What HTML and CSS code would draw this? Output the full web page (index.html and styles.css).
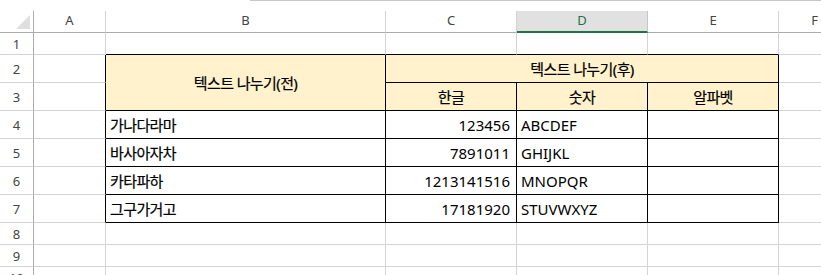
FILE: index.html
```html
<!DOCTYPE html>
<html lang="ko">
<head>
<meta charset="utf-8">
<title>텍스트 나누기</title>
<link rel="stylesheet" href="styles.css">
</head>
<body>
<div class="topbar"><div class="topbar-gap"></div><div class="topbar-line"></div></div>
<div class="sheet">
  <!-- column headers -->
  <div class="corner"><svg width="33" height="21" viewBox="0 0 33 21"><polygon points="16,18 30,18 30,4" fill="#dfdfdf"/></svg></div>
  <div class="ch">A</div>
  <div class="ch">B</div>
  <div class="ch">C</div>
  <div class="ch sel">D</div>
  <div class="ch">E</div>
  <div class="ch">F</div>

  <!-- row 1 -->
  <div class="rh">1</div>
  <div class="c"></div>
  <div class="c bb"></div>
  <div class="c bb"></div>
  <div class="c bb"></div>
  <div class="c bb"></div>
  <div class="c"></div>

  <!-- row 2 -->
  <div class="rh">2</div>
  <div class="c br"></div>
  <div class="t hd ctr ko span-r">텍스트 나누기(전)</div>
  <div class="t hd ctr ko span-c">텍스트 나누기(후)</div>
  <div class="c"></div>

  <!-- row 3 -->
  <div class="rh">3</div>
  <div class="c br"></div>
  <div class="t hd ctr ko">한글</div>
  <div class="t hd ctr ko">숫자</div>
  <div class="t hd ctr ko">알파벳</div>
  <div class="c"></div>

  <!-- row 4 -->
  <div class="rh">4</div>
  <div class="c br"></div>
  <div class="t txt ko">가나다라마</div>
  <div class="t num">123456</div>
  <div class="t txt">ABCDEF</div>
  <div class="t"></div>
  <div class="c"></div>

  <!-- row 5 -->
  <div class="rh">5</div>
  <div class="c br"></div>
  <div class="t txt ko">바사아자차</div>
  <div class="t num">7891011</div>
  <div class="t txt">GHIJKL</div>
  <div class="t"></div>
  <div class="c"></div>

  <!-- row 6 -->
  <div class="rh">6</div>
  <div class="c br"></div>
  <div class="t txt ko">카타파하</div>
  <div class="t num">1213141516</div>
  <div class="t txt">MNOPQR</div>
  <div class="t"></div>
  <div class="c"></div>

  <!-- row 7 -->
  <div class="rh">7</div>
  <div class="c br"></div>
  <div class="t txt ko">그구가거고</div>
  <div class="t num">17181920</div>
  <div class="t txt">STUVWXYZ</div>
  <div class="t"></div>
  <div class="c"></div>

  <!-- row 8 -->
  <div class="rh">8</div>
  <div class="c"></div><div class="c"></div><div class="c"></div><div class="c"></div><div class="c"></div><div class="c"></div>

  <!-- row 9 -->
  <div class="rh">9</div>
  <div class="c"></div><div class="c"></div><div class="c"></div><div class="c"></div><div class="c"></div><div class="c"></div>

  <!-- row 10 -->
  <div class="rh rh-last">10</div>
  <div class="c"></div><div class="c"></div><div class="c"></div><div class="c"></div><div class="c"></div><div class="c"></div>
</div>
</body>
</html>
```

FILE: styles.css
```css
html, body {
  margin: 0;
  padding: 0;
  background: #ffffff;
  overflow: hidden;
  width: 821px;
  height: 275px;
}

.topbar {
  display: flex;
  height: 11px;
}
.topbar-gap {
  width: 250px;
}
.topbar-line {
  flex: 1;
  border-top: 1px solid #c6c6c6;
}

.sheet {
  display: grid;
  grid-template-columns: 34px 72px 280px 131px 131px 131px 72px;
  grid-template-rows: 22px 22px 28px 28px 28px 28px 28px 28px 22px 22px 22px;
  font-family: "Noto Sans", "Noto Sans CJK KR", sans-serif;
  font-size: 15px;
  color: #000000;
}

.sheet > div {
  box-sizing: border-box;
  min-width: 0;
  overflow: hidden;
  white-space: nowrap;
}

.corner {
  border-right: 1px solid #ababab;
  border-bottom: 1px solid #ababab;
}
.corner svg {
  display: block;
}

.ch {
  display: flex;
  align-items: center;
  justify-content: center;
  padding-bottom: 3px;
  font-size: 13px;
  color: #444444;
  border-right: 1px solid #d4d4d4;
  border-bottom: 1px solid #ababab;
}
.ch.sel {
  background: #e1e1e1;
  color: #217346;
  border-bottom: 2px solid #217346;
  border-right-color: #c6c6c6;
  padding-bottom: 2px;
}

.rh {
  display: flex;
  align-items: center;
  justify-content: center;
  font-size: 13px;
  color: #444444;
  border-right: 1px solid #ababab;
  border-bottom: 1px solid #d4d4d4;
}
.rh-last {
  align-items: flex-start;
  padding-top: 2px;
}

.c {
  border-right: 1px solid #d4d4d4;
  border-bottom: 1px solid #d4d4d4;
}
.c.bb {
  border-bottom-color: #000000;
}
.c.br {
  border-right-color: #000000;
}

.t {
  display: flex;
  align-items: center;
  line-height: 20px;
  border-right: 1px solid #000000;
  border-bottom: 1px solid #000000;
}
.hd {
  background: #fff2cc;
}
.ctr {
  justify-content: center;
}
.txt {
  justify-content: flex-start;
  padding-left: 4px;
}
.num {
  justify-content: flex-end;
  padding-right: 6px;
}
.ko {
  letter-spacing: -0.6px;
  -webkit-text-stroke: 0.2px #000000;
}

.span-r {
  grid-row: span 2;
}
.span-c {
  grid-column: span 3;
}
```
